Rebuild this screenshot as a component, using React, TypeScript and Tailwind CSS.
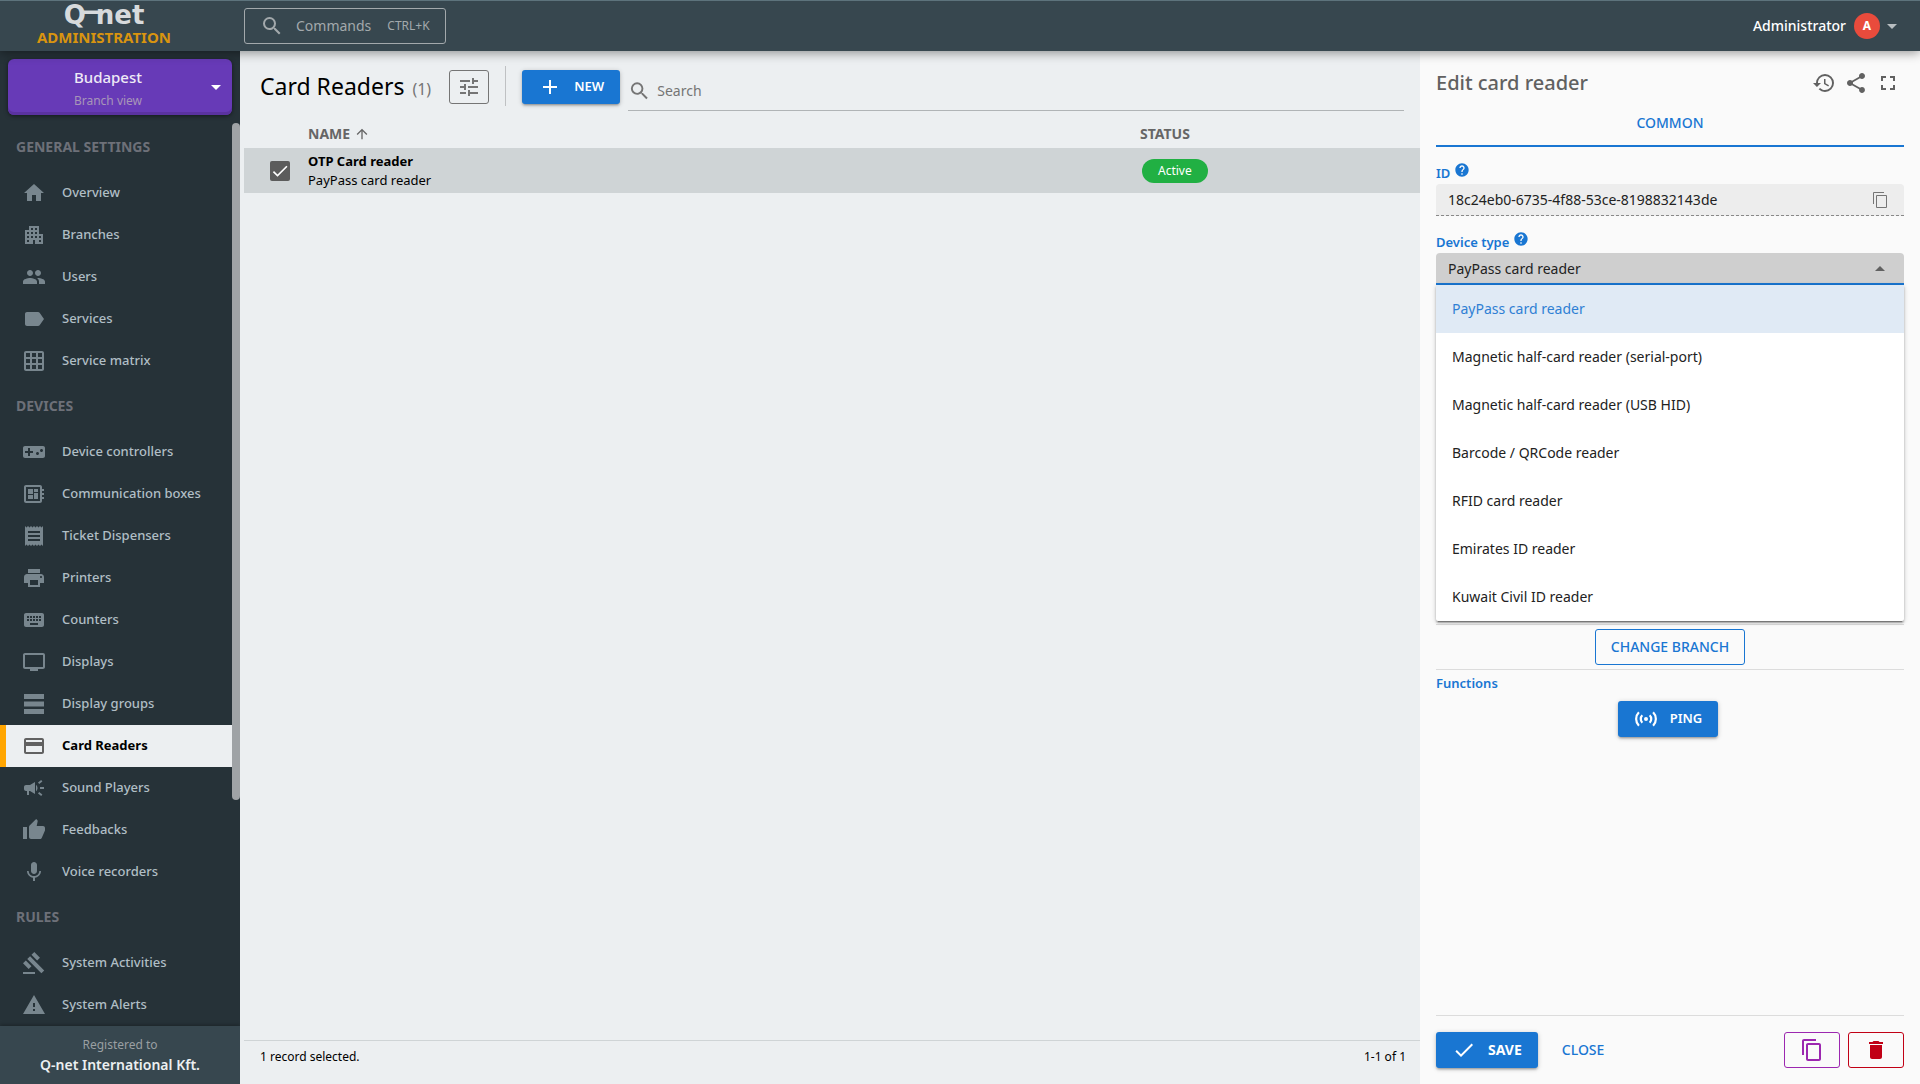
import { useState } from 'react'
import type { ReactNode } from 'react'
import type { IconType } from 'react-icons'
import {
  MdAdd,
  MdApartment,
  MdArrowDropDown,
  MdArrowDropUp,
  MdArrowUpward,
  MdCampaign,
  MdCheck,
  MdContentCopy,
  MdCreditCard,
  MdDelete,
  MdDeveloperBoard,
  MdFullscreen,
  MdGavel,
  MdGridOn,
  MdGroup,
  MdHelp,
  MdHistory,
  MdHome,
  MdKeyboard,
  MdLabel,
  MdMic,
  MdPrint,
  MdReceipt,
  MdSearch,
  MdShare,
  MdThumbUp,
  MdTune,
  MdTv,
  MdVideogameAsset,
  MdWarning,
} from 'react-icons/md'

type NavItem = { label: string; icon: IconType; active?: boolean }

// three stacked bars
const BarsIcon: IconType = ({ className }) => (
  <svg viewBox="0 0 24 24" fill="currentColor" width="1em" height="1em" className={className}>
    <path d="M2 2h20v5H2zM2 9.5h20v5H2zM2 17h20v5H2z" />
  </svg>
)

// signal dot with two waves on each side
const PingIcon: IconType = ({ className }) => (
  <svg viewBox="0 0 24 24" fill="none" stroke="currentColor" strokeWidth="2.2" width="1em" height="1em" className={className}>
    <circle cx="12" cy="12" r="2" fill="currentColor" stroke="none" />
    <path d="M8.300 8.300a5.200 5.200 0 0 0 0 7.400M15.700 8.300a5.200 5.200 0 0 1 0 7.400M4.900 5.300a9.500 9.500 0 0 0 0 13.400M19.100 5.300a9.500 9.500 0 0 1 0 13.400" />
  </svg>
)

const sections: { title: string; items: NavItem[] }[] = [
  {
    title: 'GENERAL SETTINGS',
    items: [
      { label: 'Overview', icon: MdHome },
      { label: 'Branches', icon: MdApartment },
      { label: 'Users', icon: MdGroup },
      { label: 'Services', icon: MdLabel },
      { label: 'Service matrix', icon: MdGridOn },
    ],
  },
  {
    title: 'DEVICES',
    items: [
      { label: 'Device controllers', icon: MdVideogameAsset },
      { label: 'Communication boxes', icon: MdDeveloperBoard },
      { label: 'Ticket Dispensers', icon: MdReceipt },
      { label: 'Printers', icon: MdPrint },
      { label: 'Counters', icon: MdKeyboard },
      { label: 'Displays', icon: MdTv },
      { label: 'Display groups', icon: BarsIcon },
      { label: 'Card Readers', icon: MdCreditCard, active: true },
      { label: 'Sound Players', icon: MdCampaign },
      { label: 'Feedbacks', icon: MdThumbUp },
      { label: 'Voice recorders', icon: MdMic },
    ],
  },
  {
    title: 'RULES',
    items: [
      { label: 'System Activities', icon: MdGavel },
      { label: 'System Alerts', icon: MdWarning },
    ],
  },
]

const deviceTypes = [
  'PayPass card reader',
  'Magnetic half-card reader (serial-port)',
  'Magnetic half-card reader (USB HID)',
  'Barcode / QRCode reader',
  'RFID card reader',
  'Emirates ID reader',
  'Kuwait Civil ID reader',
]

const raised = 'rounded-[3px] bg-[#1976d2] text-white shadow-[0_1px_5px_rgba(0,0,0,0.2),0_2px_2px_rgba(0,0,0,0.14),0_3px_1px_-2px_rgba(0,0,0,0.12)]'

function Logo() {
  return (
    <div className="flex flex-col items-center pb-1.5">
      <div className="flex font-['DejaVu_Sans'] text-[26px] leading-7 font-bold text-[#d7dadc]">
        <span>Q</span>
        {/* bar that joins the Q to the n */}
        <svg viewBox="0 0 10 28" className="h-7 w-2.5 overflow-visible" fill="currentColor" aria-hidden>
          <path d="M-2 9.500h16v3.500H-2z" />
        </svg>
        <span>net</span>
      </div>
      <span className="text-[15px] leading-4 font-bold text-[#d9940f]">ADMINISTRATION</span>
    </div>
  )
}

function TopBar() {
  return (
    <header className="z-10 flex h-[51px] shrink-0 items-center border-t border-[#5d737c] bg-[#37474f] shadow-[0_2px_10px_rgba(0,0,0,0.4)]">
      <div className="w-60 pr-8">
        <Logo />
      </div>
      <button className="ml-1 flex h-9 items-center rounded-[3px] border border-[#a3a9ac] px-[15px] text-[#a3a9ac]">
        <MdSearch className="size-6" />
        <span className="ml-3 text-sm">Commands</span>
        <span className="ml-4 text-xs">CTRL+K</span>
      </button>
      <button className="mr-4 ml-auto flex items-center text-sm font-medium text-white">
        Administrator
        <span className="ml-2 flex size-[26px] items-center justify-center rounded-full bg-[#e94b3c] text-xs font-bold">A</span>
        <MdArrowDropDown className="size-6 text-[#b8bec1]" />
      </button>
    </header>
  )
}

function Sidebar() {
  return (
    <aside className="flex w-60 shrink-0 flex-col bg-[#263238]">
      <button className="mx-2 mt-2 flex h-14 shrink-0 items-center rounded-md bg-[#673ab7] pr-1 text-center shadow-[inset_0_-3px_0_#5a32a0,0_1px_4px_rgba(0,0,0,0.5)]">
        <span className="flex flex-1 flex-col pt-[3px] pl-1">
          <span className="text-[15px] leading-6 font-medium text-[#eeeaf6]">Budapest</span>
          <span className="text-xs leading-6 text-[#a796b8]">Branch view</span>
        </span>
        <MdArrowDropDown className="size-6 text-white" />
      </button>
      <div className="mt-2 flex min-h-0 flex-1 overflow-hidden">
        <nav className="min-w-0 flex-1">
          {sections.map((s) => (
            <section key={s.title}>
              <h2 className="flex h-[49px] items-center pb-px pl-4 text-sm font-bold text-[#6d7078]">{s.title}</h2>
              {s.items.map(({ label, icon: Icon, active }) => (
                <a
                  key={label}
                  href="#"
                  className={
                    active
                      ? 'flex h-[42px] items-center border-l-6 border-[#ffa500] bg-[#eceff1] pl-4 text-[13px] font-bold text-black'
                      : 'flex h-[42px] items-center pl-[22px] text-[13px] font-medium text-[#b0bec5]'
                  }
                >
                  <Icon className={active ? 'size-6 text-[#616161]' : 'size-6 text-[#78868e]'} />
                  <span className="ml-4 pb-px">{label}</span>
                </a>
              ))}
            </section>
          ))}
        </nav>
        <div className="h-3/4 w-2 shrink-0 rounded-full bg-[#9fa3a6]" />
      </div>
      <div className="flex h-[58px] shrink-0 flex-col items-center justify-center bg-[#37474f] shadow-[0_-1px_4px_rgba(0,0,0,0.3)]">
        <span className="text-xs leading-5 text-[#9a9fa2]">Registered to</span>
        <span className="text-sm leading-5 font-semibold text-[#eceff1]">Q-net International Kft.</span>
      </div>
    </aside>
  )
}

function CardReaders() {
  return (
    <main className="flex min-w-0 flex-1 flex-col bg-[#eceff1] pl-1">
      <div className="flex h-[69px] items-center pr-4 pl-4">
        <h1 className="pt-0.5 text-[23px]">
          Card Readers <span className="ml-0.5 text-base text-[#757575]">(1)</span>
        </h1>
        <button aria-label="Columns" className="mt-[3px] ml-[18px] flex h-[34px] w-10 items-center justify-center rounded-[3px] border border-[#757575] text-[#757575]">
          <MdTune className="size-6" />
        </button>
        <div className="mx-4 h-10 w-px bg-[#bfc1c3]" />
        <button className={`mt-[3px] flex h-[34px] items-center px-4 text-[13px] font-semibold ${raised}`}>
          <MdAdd className="mr-3 size-6" />
          NEW
        </button>
        <label className="mb-[9px] ml-2 flex h-10 flex-1 items-center self-end border-b border-[#b0b4b6] text-[#757575]">
          <MdSearch className="size-6" />
          <input type="text" aria-label="Search" placeholder="Search" className="ml-1.5 w-full bg-transparent text-sm outline-none placeholder:text-[#757575]" />
        </label>
      </div>
      <table className="w-full table-fixed border-collapse text-left">
        <thead>
          <tr className="h-7 text-sm text-[#666]">
            <th className="w-16" />
            <th className="w-[832px] font-bold">
              <span className="flex items-center">
                NAME <MdArrowUpward className="ml-1 size-4" />
              </span>
            </th>
            <th className="font-bold">STATUS</th>
          </tr>
        </thead>
        <tbody>
          <tr className="h-[45px] bg-[#cfd4d6]">
            <td className="pl-[26px]">
              <span className="relative flex size-5">
                <input type="checkbox" defaultChecked aria-label="Select OTP Card reader" className="size-5 appearance-none rounded-xs bg-[#5c5c5c]" />
                <MdCheck className="pointer-events-none absolute inset-0 size-5 text-white" />
              </span>
            </td>
            <td className="text-[13px] leading-[19px]">
              <div className="font-bold">OTP Card reader</div>
              <div>PayPass card reader</div>
            </td>
            <td>
              <span className="ml-[2px] flex h-6 w-fit items-center rounded-full bg-[#21b043] px-4 text-xs text-white">Active</span>
            </td>
          </tr>
        </tbody>
      </table>
      <div className="mt-auto flex h-11 items-center justify-between border-t border-[#cfd4d6] pr-[14px] pb-3 pl-4 text-xs">
        <span>1 record selected.</span>
        <span>1-1 of 1</span>
      </div>
    </main>
  )
}

function FieldLabel({ id, children }: { id: string; children: ReactNode }) {
  return (
    <label htmlFor={id} className="flex h-6 items-center text-[13px] font-semibold text-[#1976d2]">
      <span className="pt-[3px]">{children}</span>
      <MdHelp className="mb-1 ml-1 size-4" />
    </label>
  )
}

function EditPanel() {
  const [type, setType] = useState(deviceTypes[0])
  return (
    <aside className="flex w-[500px] shrink-0 flex-col bg-[#fafafa] px-4">
      <div className="flex h-16 items-center text-[#616161]">
        <h2 className="flex-1 text-xl font-medium">Edit card reader</h2>
        <div className="mr-1 flex gap-2">
          <button aria-label="History"><MdHistory className="size-6" /></button>
          <button aria-label="Share"><MdShare className="size-6" /></button>
          <button aria-label="Fullscreen"><MdFullscreen className="size-6" /></button>
        </div>
      </div>
      <button className="h-8 border-b-2 border-[#1976d2] pb-4 text-sm leading-4 font-medium text-[#1976d2]">COMMON</button>

      <div className="mt-[13px]">
        <FieldLabel id="device-id">ID</FieldLabel>
        <div className="flex h-8 items-center rounded-t border-b border-dashed border-[#888] bg-[#ededed] px-3">
          <input id="device-id" readOnly value="18c24eb0-6735-4f88-53ce-8198832143de" className="flex-1 bg-transparent text-sm text-[#222] outline-none" />
          <button aria-label="Copy ID" className="mr-1">
            <svg viewBox="0 0 16 16" className="size-4" fill="none" stroke="#757575">
              <path d="M1.500 12V.5H12M4.500 3.500h10v12h-10z" />
            </svg>
          </button>
        </div>
      </div>

      <div className="mt-[13px]">
        <FieldLabel id="device-type">Device type</FieldLabel>
        <div className="relative">
          <select
            id="device-type"
            value={type}
            onChange={(e) => setType(e.target.value)}
            className="h-8 w-full appearance-none rounded-t border-b-2 border-[#1976d2] bg-[#cfcfcf] px-3 pt-px text-sm text-[#222] outline-none"
          >
            {deviceTypes.map((t) => (
              <option key={t}>{t}</option>
            ))}
          </select>
          <MdArrowDropUp className="pointer-events-none absolute top-1 right-3 size-6 text-[#616161]" />
          <ul
            role="listbox"
            className="absolute top-full right-0 left-0 z-10 rounded-b-xs bg-white text-sm shadow-[0_1px_5px_rgba(0,0,0,0.2),0_2px_2px_rgba(0,0,0,0.24),0_3px_1px_-2px_rgba(0,0,0,0.3)]"
          >
            {deviceTypes.map((t) => (
              <li
                key={t}
                role="option"
                aria-selected={t === type}
                onClick={() => setType(t)}
                className={t === type ? 'flex h-12 items-center bg-[#e0eaf5] px-4 text-[#2f80d4]' : 'flex h-12 items-center px-4 text-[#222]'}
              >
                {t}
              </li>
            ))}
          </ul>
        </div>
      </div>

      <div className="mt-[339px] flex justify-center border-y border-[#dcdcdc] py-1">
        <button className="h-9 rounded-[3px] border border-[#1976d2] px-[15px] text-sm font-medium text-[#1976d2]">CHANGE BRANCH</button>
      </div>
      <h3 className="text-[13px] leading-[26px] font-semibold text-[#1976d2]">Functions</h3>
      <button className={`mt-[5px] mr-1 flex h-9 items-center self-center px-4 text-[13px] font-semibold ${raised}`}>
        <PingIcon className="mr-3 size-6" />
        PING
      </button>

      <div className="mt-auto flex h-[69px] items-center border-t border-[#dcdcdc]">
        <button className={`flex h-9 items-center px-4 text-sm font-bold ${raised}`}>
          <MdCheck className="mr-3 size-6" />
          SAVE
        </button>
        <button className="ml-6 text-sm font-medium text-[#1976d2]">CLOSE</button>
        <button aria-label="Duplicate" className="mr-2 ml-auto flex h-9 w-14 items-center justify-center rounded-[3px] border border-[#9c27b0] text-[#9c27b0]">
          <MdContentCopy className="size-6" />
        </button>
        <button aria-label="Delete" className="flex h-9 w-14 items-center justify-center rounded-[3px] border border-[#c10015] text-[#c10015]">
          <MdDelete className="size-6" />
        </button>
      </div>
    </aside>
  )
}

export default function App() {
  return (
    <div className="flex h-screen flex-col font-['Noto_Sans',sans-serif] text-black">
      <TopBar />
      <div className="flex min-h-0 flex-1">
        <Sidebar />
        <CardReaders />
        <EditPanel />
      </div>
    </div>
  )
}
